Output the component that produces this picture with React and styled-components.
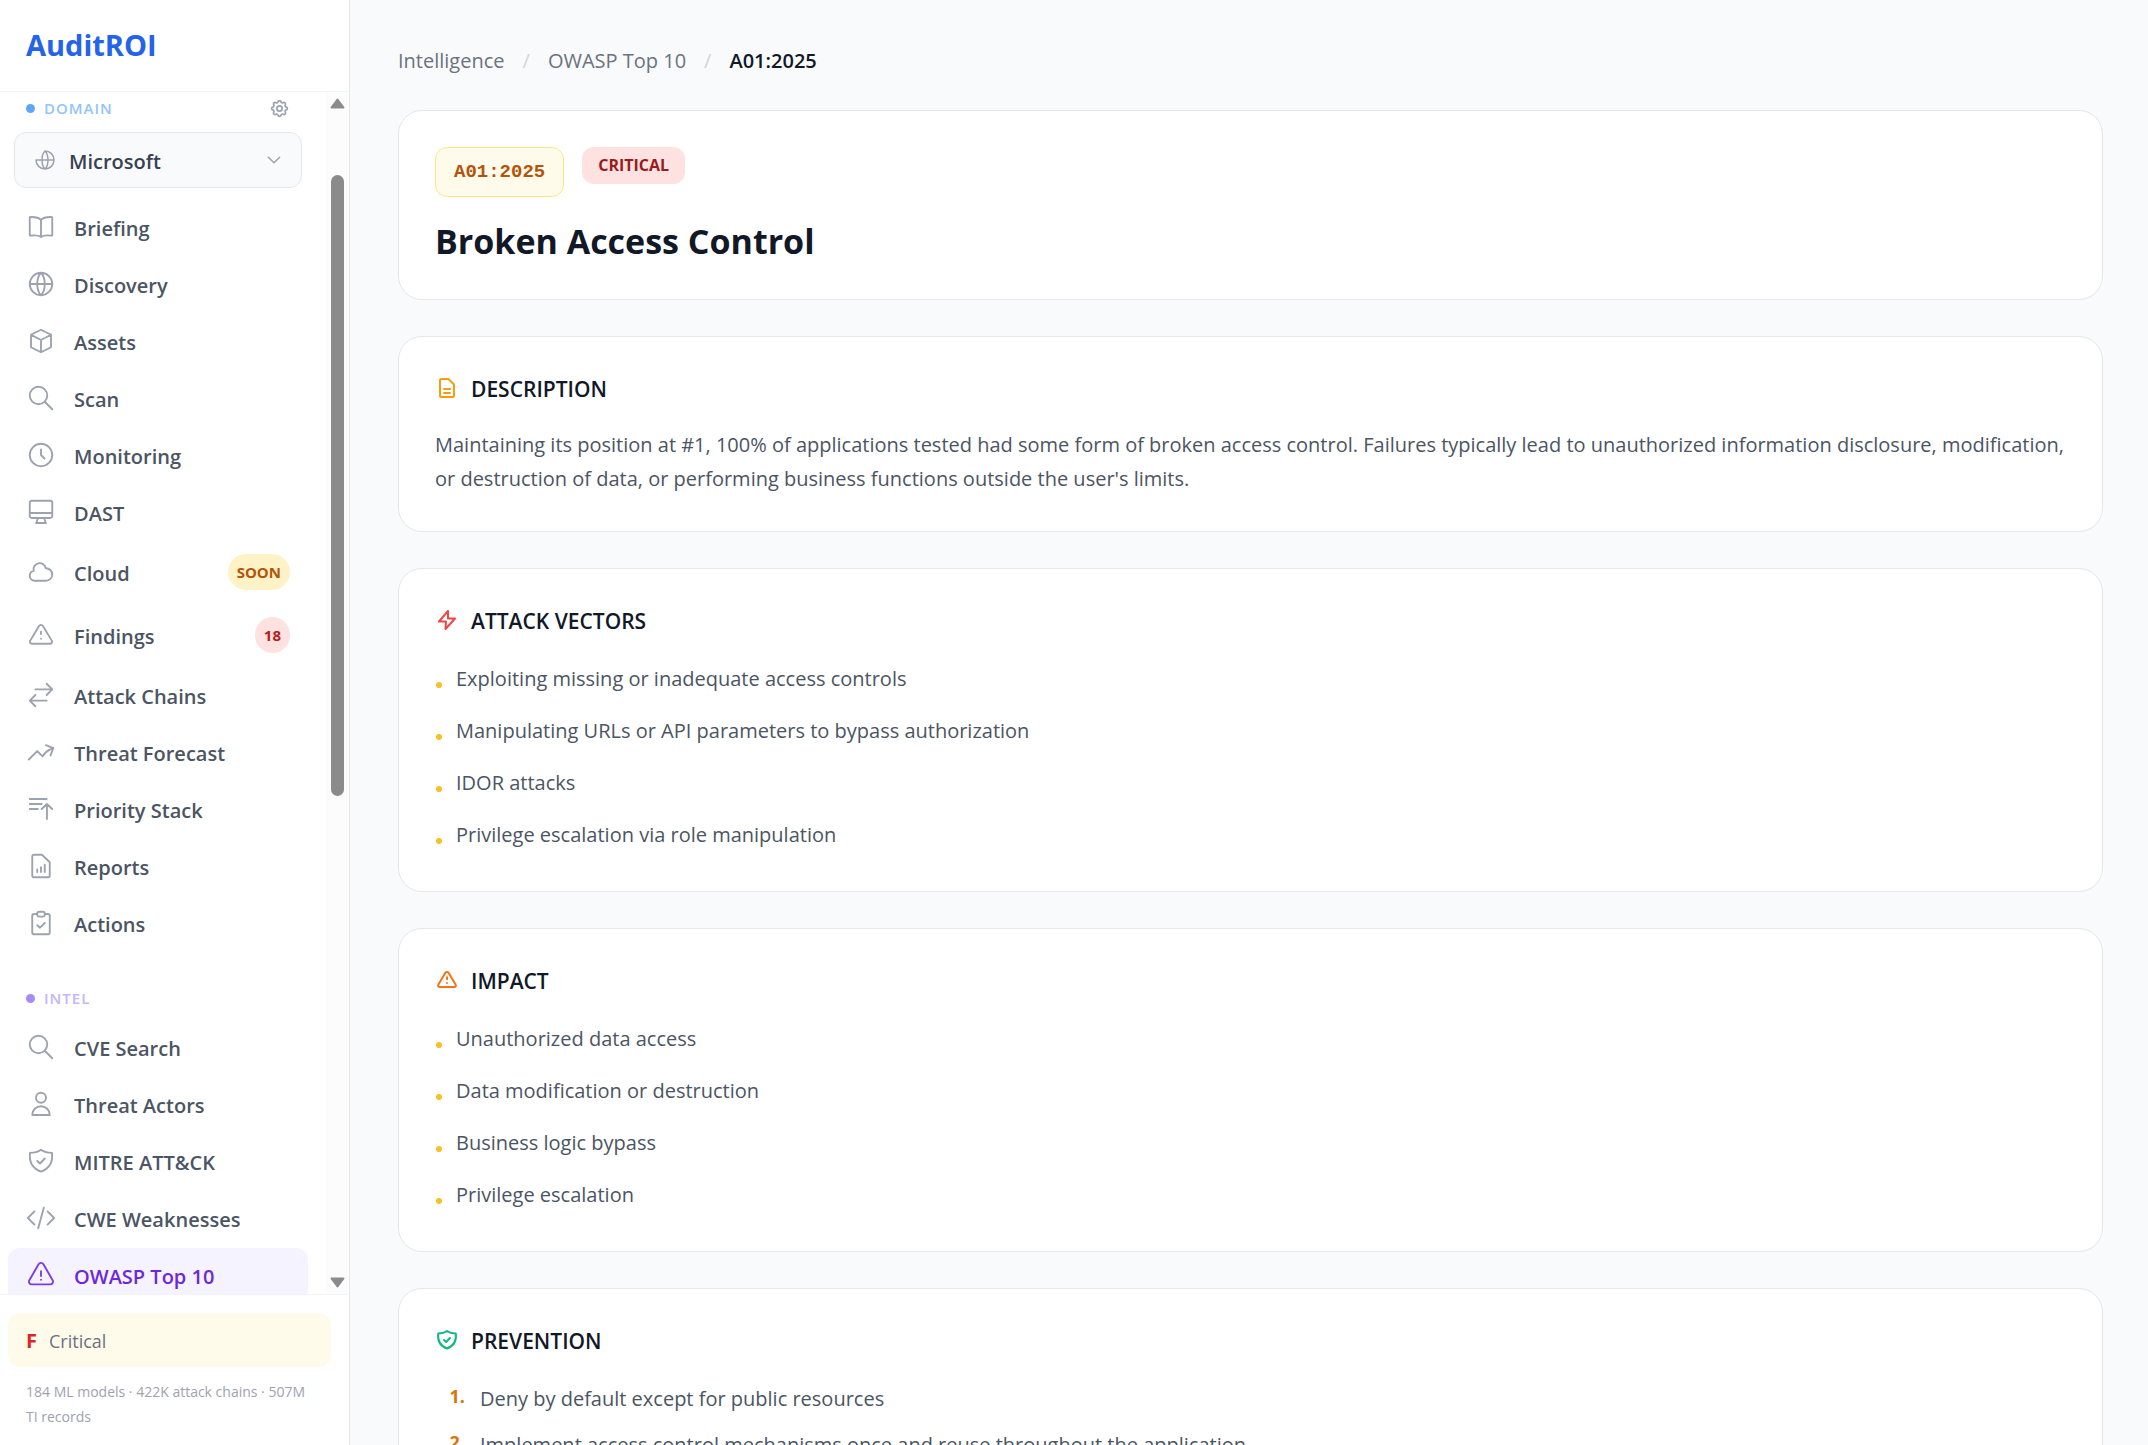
import React from 'react';
import styled, { createGlobalStyle } from 'styled-components';

const GlobalStyle = createGlobalStyle`
  * {
    box-sizing: border-box;
  }

  body {
    margin: 0;
    font-family: 'Open Sans', 'Noto Sans', sans-serif;
    font-size: 20px;
    line-height: 30px;
    color: #111827;
    background: #f9fafc;
  }

  h1, h2, p, ul, ol {
    margin: 0;
    padding: 0;
  }

  ul, ol {
    list-style: none;
  }

  a {
    color: inherit;
    text-decoration: none;
  }
`;

const Layout = styled.div`
  display: flex;
  height: 100vh;
  overflow: hidden;
`;

const Sidebar = styled.aside`
  display: flex;
  flex-direction: column;
  flex: 0 0 350px;
  background: #ffffff;
  border-right: 1px solid #e5e7eb;
`;

const SidebarHeader = styled.div`
  display: flex;
  align-items: center;
  height: 92px;
  padding: 0 26px 2px;
  border-bottom: 1px solid #f3f4f6;
`;

const Logo = styled.a`
  font-weight: 700;
  font-size: 29px;
  line-height: 36px;
  color: #2563eb;
`;

const SidebarBody = styled.div`
  display: flex;
  flex: 1;
  min-height: 0;
`;

const SidebarScroll = styled.div`
  flex: 1;
  padding: 4px 18px 0 8px;
  overflow: hidden;
`;

const Scrollbar = styled.div`
  display: flex;
  flex-direction: column;
  align-items: center;
  justify-content: space-between;
  width: 23px;
  padding: 6px 0;
  background: #fcfcfc;
`;

const ScrollTrack = styled.div`
  flex: 1;
  width: 13px;
  padding-top: 66px;
`;

const ScrollThumb = styled.div`
  height: 621px;
  border-radius: 7px;
  background: #8b8b8b;
`;

const SectionLabel = styled.div`
  display: flex;
  align-items: center;
  gap: 9px;
  height: 24px;
  padding: 0 18px;
  margin-top: ${({ $spaced }) => ($spaced ? '36px' : '0')};
  margin-bottom: ${({ $spaced }) => ($spaced ? '10px' : '12px')};
  font-weight: 600;
  font-size: 15px;
  letter-spacing: 1px;
  text-transform: uppercase;
  color: ${({ $color }) => $color};

  &::before {
    content: '';
    width: 9px;
    height: 9px;
    border-radius: 50%;
    background: ${({ $dot }) => $dot};
  }
`;

const SettingsButton = styled.button`
  display: flex;
  padding: 0;
  margin-left: auto;
  border: none;
  background: none;
  color: #9ca3af;
  cursor: pointer;
`;

const DomainPicker = styled.label`
  display: flex;
  align-items: center;
  gap: 12px;
  height: 56px;
  padding: 0 18px;
  margin: 0 6px 12px;
  border: 1px solid #e5e7eb;
  border-radius: 12px;
  background: #f9fafb;
  color: #9ca3af;
`;

const DomainSelect = styled.select`
  flex: 1;
  min-width: 0;
  padding: 3px 0 0;
  border: none;
  outline: none;
  appearance: none;
  background: none;
  font-family: inherit;
  font-weight: 600;
  font-size: 20px;
  line-height: 27px;
  color: #374151;
`;

const NavList = styled.ul`
  display: flex;
  flex-direction: column;
  gap: 3px;
`;

const NavLink = styled.a`
  display: flex;
  align-items: center;
  gap: 18px;
  padding: 12px 18px;
  border-radius: 12px;
  font-weight: 600;
  color: ${({ $active }) => ($active ? '#6d28d9' : '#4b5563')};
  background: ${({ $active }) => ($active ? '#f5f3ff' : 'transparent')};

  svg {
    color: ${({ $active }) => ($active ? '#7c3aed' : '#9ca3af')};
  }
`;

const NavLabel = styled.span`
  padding-top: 3px;
  line-height: 27px;
`;

const NavBadge = styled.span`
  padding: 0 9px;
  margin-left: auto;
  border-radius: 18px;
  font-weight: 700;
  font-size: 15px;
  line-height: 36px;
  color: ${({ $tone }) => ($tone === 'danger' ? '#b91c1c' : '#b45309')};
  background: ${({ $tone }) => ($tone === 'danger' ? '#fee2e2' : '#fef3c7')};
`;

const SidebarFooter = styled.div`
  padding: 18px 18px 16px 8px;
  border-top: 1px solid #f3f4f6;
`;

const GradeCard = styled.a`
  display: flex;
  align-items: center;
  gap: 12px;
  height: 54px;
  padding: 2px 18px 0;
  margin-bottom: 12px;
  border-radius: 12px;
  font-weight: 500;
  font-size: 18px;
  color: #6b7280;
  background: #fffbeb;

  strong {
    font-weight: 700;
    font-size: 20px;
    color: #dc2626;
  }
`;

const Footnote = styled.p`
  padding: 0 18px;
  font-size: 14px;
  line-height: 25px;
  color: #9ca3af;
`;

const Main = styled.main`
  flex: 1;
  min-width: 0;
  padding: 46px 45px 45px 48px;
  overflow: hidden;
`;

const Breadcrumb = styled.nav`
  display: flex;
  gap: 18px;
  margin-bottom: 34px;
  color: #6b7280;

  span {
    color: #d1d5db;
  }

  strong {
    font-weight: 600;
    color: #111827;
  }
`;

const Card = styled.section`
  padding: 36px;
  margin-bottom: 36px;
  border: 1px solid #e5e7eb;
  border-radius: 24px;
  background: #ffffff;
`;

const BadgeRow = styled.div`
  display: flex;
  align-items: flex-start;
  gap: 18px;
  margin-bottom: 22px;
`;

const CodeBadge = styled.span`
  padding: 0 18px;
  border: 1px solid #fde68a;
  border-radius: 12px;
  font-family: 'Liberation Mono', monospace;
  font-weight: 700;
  font-size: 19px;
  line-height: 48px;
  color: #b45309;
  background: #fffbeb;
`;

const SeverityBadge = styled.span`
  padding: 0 16px;
  border-radius: 12px;
  font-weight: 700;
  font-size: 16px;
  line-height: 37px;
  text-transform: uppercase;
  color: #991b1b;
  background: #fee2e2;
`;

const Title = styled.h1`
  font-weight: 700;
  font-size: 34px;
  line-height: 44px;
`;

const CardTitle = styled.h2`
  display: flex;
  align-items: center;
  gap: 12px;
  margin-bottom: 24px;
  font-weight: 600;
  font-size: 21px;
  line-height: 27px;
  text-transform: uppercase;

  svg {
    color: ${({ $iconColor }) => $iconColor};
  }

  span {
    padding-top: 3px;
  }
`;

const Paragraph = styled.p`
  padding-top: 1px;
  margin-bottom: -1px;
  line-height: 34px;
  color: #4b5563;
`;

const BulletList = styled.ul`
  display: flex;
  flex-direction: column;
  gap: 12px;
`;

const BulletItem = styled.li`
  display: flex;
  align-items: flex-start;
  gap: 14px;
  padding: 3px 0;
  line-height: 34px;
  color: #4b5563;

  &::before {
    content: '';
    width: 6px;
    height: 6px;
    margin: 20px 0 0 1px;
    border-radius: 50%;
    background: #fbbf24;
  }
`;

const StepList = styled.ol`
  display: flex;
  flex-direction: column;
  gap: 6px;
  counter-reset: step;
`;

const StepItem = styled.li`
  display: flex;
  align-items: flex-start;
  gap: 15px;
  padding: 3px 0;
  line-height: 34px;
  color: #4b5563;
  counter-increment: step;

  &::before {
    content: counter(step) '.';
    width: 30px;
    font-weight: 700;
    font-size: 18px;
    line-height: 28px;
    text-align: right;
    color: #d97706;
  }
`;

const StrokeIcon = styled.svg`
  flex: none;
  fill: none;
  stroke: currentColor;
  stroke-linecap: round;
  stroke-linejoin: round;
`;

const ICONS = {
  book: 'M12 6.25C10.4 4.5 7.4 3.9 3.5 4a.5.5 0 0 0-.5.5v13.9a.5.5 0 0 0 .6.5c3.6-.5 6.8-.1 8.4 1.1 1.6-1.2 4.8-1.6 8.400-1.1a.5.5 0 0 0 .6-.5V4.5a.5.5 0 0 0-.5-.5c-3.9-.1-6.9.5-8.5 2.250v13.750',
  globe: 'M21 12a9 9 0 1 1-18 0 9 9 0 0 1 18 0zM3 12h18M12 3c-2 2-3 5.200-3 9s1 7 3 9c2-2 3-5.200 3-9s-1-7-3-9z',
  globePartial: 'M12 3a9 9 0 1 1-9 9h18M12 3c-2 2-3 5.200-3 9s1 7 3 9c2-2 3-5.200 3-9s-1-7-3-9z',
  box: 'M12 3l8 4v10l-8 4-8-4V7zM4 7l8 4.200L20 7M12 11.200V21',
  search: 'M17 10a7 7 0 1 1-14 0 7 7 0 0 1 14 0zM15 15l6 6',
  clock: 'M21 12a9 9 0 1 1-18 0 9 9 0 0 1 18 0zM12 7.500V12l2.800 2.800',
  monitor: 'M4.500 3h15A1.500 1.500 0 0 1 21 4.500v10.800a1.500 1.500 0 0 1-1.500 1.500h-15A1.500 1.500 0 0 1 3 15.300V4.500A1.500 1.500 0 0 1 4.500 3zM3 12.750h18M9.400 17l-1.100 3.750M14.600 17l1.100 3.750M8 20.750h8',
  cloud: 'M3 15a4 4 0 004 4h9a5 5 0 10-.1-9.999 5.002 5.002 0 10-9.780 2.096A4.001 4.001 0 003 15z',
  warning: 'M12 9.250v2M12 15h.01M10.400 4.800a1.850 1.850 0 0 1 3.200 0l7.100 11.900a1.500 1.500 0 0 1-1.300 2.300H4.600a1.500 1.500 0 0 1-1.300-2.300z',
  swap: 'M7.500 21 3 16.500m0 0L7.500 12M3 16.500h13.500m0-13.500L21 7.500m0 0L16.500 12M21 7.500H7.500',
  trend: 'M2.250 18 9 11.250l4.306 4.306a11.950 11.950 0 0 1 5.814-5.518l2.740-1.220m0 0-5.940-2.281m5.940 2.280-2.280 5.941',
  stack: 'M3 4h13.500M3 8h9.500M3 12h6.500M12.500 12l4.250-4L21 12M16.750 8v12',
  report: 'M6.500 3h6.300L19 9v10.500a1.500 1.500 0 0 1-1.500 1.500h-11A1.500 1.500 0 0 1 5 19.500v-15A1.500 1.500 0 0 1 6.500 3zM9 14.750v2M12 13v3.750M15 11v5.750',
  clipboard: 'M9 4.750H6.500A1.500 1.500 0 0 0 5 6.250V19.500A1.500 1.500 0 0 0 6.500 21h11a1.500 1.500 0 0 0 1.500-1.500V6.250a1.500 1.500 0 0 0-1.500-1.500H15M10.500 3h3a1.500 1.500 0 0 1 1.500 1.500v.9a1.500 1.500 0 0 1-1.500 1.500h-3A1.500 1.500 0 0 1 9 5.400v-.9A1.500 1.500 0 0 1 10.500 3zM9 13.750l2.200 2L15 12',
  person: 'M16 7a4 4 0 1 1-8 0 4 4 0 0 1 8 0zM5 20.750a7 7 0 0 1 14 0z',
  shield: 'M12 3C9.500 4.800 6.800 5.500 3.200 5.500 2.400 12.800 5 18 12 20.500c7-2.500 9.600-7.700 8.800-15C17.200 5.500 14.500 4.800 12 3zM9 12l2.200 2L15 10',
  code: 'M17.250 6.750 22.500 12l-5.250 5.250m-10.500 0L1.500 12l5.250-5.250m7.500-3-4.500 16.500',
  triangle: 'M12 9v3.750m-9.303 3.376c-.866 1.500.217 3.374 1.948 3.374h14.710c1.730 0 2.813-1.874 1.948-3.374L13.949 3.378c-.866-1.500-3.032-1.500-3.898 0L2.697 16.126ZM12 15.750h.007v.008H12v-.008Z',
  chevron: 'M19.500 8.250l-7.500 7.500-7.500-7.500',
  gear: 'M10.325 4.317c.426-1.756 2.924-1.756 3.350 0a1.724 1.724 0 002.573 1.066c1.543-.94 3.310.826 2.370 2.370a1.724 1.724 0 001.065 2.572c1.756.426 1.756 2.924 0 3.350a1.724 1.724 0 00-1.066 2.573c.94 1.543-.826 3.310-2.370 2.370a1.724 1.724 0 00-2.572 1.065c-.426 1.756-2.924 1.756-3.350 0a1.724 1.724 0 00-2.573-1.066c-1.543.94-3.310-.826-2.370-2.370a1.724 1.724 0 00-1.065-2.572c-1.756-.426-1.756-2.924 0-3.350a1.724 1.724 0 001.066-2.573c-.94-1.543.826-3.310 2.370-2.370.996.608 2.296.07 2.572-1.065zM15 12a3 3 0 11-6 0 3 3 0 016 0z',
  document: 'M6.500 3h7L19 8.500v11a1.500 1.500 0 0 1-1.500 1.500h-11A1.500 1.500 0 0 1 5 19.500v-15A1.500 1.500 0 0 1 6.500 3zM9 13h6M9 17h6',
  bolt: 'M13 3 4 13.500h7L10.500 21 20 10.500h-7z',
};

function Icon({ name, size = 30, weight = 1.5 }) {
  return (
    <StrokeIcon viewBox="0 0 24 24" width={size} height={size} strokeWidth={weight} aria-hidden="true">
      <path d={ICONS[name]} />
    </StrokeIcon>
  );
}

const domainLinks = [
  { icon: 'book', label: 'Briefing' },
  { icon: 'globe', label: 'Discovery' },
  { icon: 'box', label: 'Assets' },
  { icon: 'search', label: 'Scan' },
  { icon: 'clock', label: 'Monitoring' },
  { icon: 'monitor', label: 'DAST' },
  { icon: 'cloud', label: 'Cloud', badge: 'SOON' },
  { icon: 'warning', label: 'Findings', badge: '18', tone: 'danger' },
  { icon: 'swap', label: 'Attack Chains' },
  { icon: 'trend', label: 'Threat Forecast' },
  { icon: 'stack', label: 'Priority Stack' },
  { icon: 'report', label: 'Reports' },
  { icon: 'clipboard', label: 'Actions' },
];

const intelLinks = [
  { icon: 'search', label: 'CVE Search' },
  { icon: 'person', label: 'Threat Actors' },
  { icon: 'shield', label: 'MITRE ATT&CK' },
  { icon: 'code', label: 'CWE Weaknesses' },
  { icon: 'triangle', label: 'OWASP Top 10', active: true },
];

const attackVectors = [
  'Exploiting missing or inadequate access controls',
  'Manipulating URLs or API parameters to bypass authorization',
  'IDOR attacks',
  'Privilege escalation via role manipulation',
];

const impacts = [
  'Unauthorized data access',
  'Data modification or destruction',
  'Business logic bypass',
  'Privilege escalation',
];

const preventions = [
  'Deny by default except for public resources',
  'Implement access control mechanisms once and reuse throughout the application',
];

function Nav({ links }) {
  return (
    <NavList>
      {links.map(({ icon, label, badge, tone, active }) => (
        <li key={label}>
          <NavLink href="#" $active={active}>
            <Icon name={icon} />
            <NavLabel>{label}</NavLabel>
            {badge && <NavBadge $tone={tone}>{badge}</NavBadge>}
          </NavLink>
        </li>
      ))}
    </NavList>
  );
}

function DetailCard({ title, icon, iconColor, children }) {
  return (
    <Card>
      <CardTitle $iconColor={iconColor}>
        <Icon name={icon} size={24} weight={2} />
        <span>{title}</span>
      </CardTitle>
      {children}
    </Card>
  );
}

export default function App() {
  return (
    <React.Fragment>
      <GlobalStyle />
      <Layout>
        <Sidebar>
          <SidebarHeader>
            <Logo href="#">AuditROI</Logo>
          </SidebarHeader>
          <SidebarBody>
            <SidebarScroll>
              <SectionLabel $color="#93c5fd" $dot="#60a5fa">
                Domain
                <SettingsButton type="button" aria-label="Domain settings">
                  <Icon name="gear" size={21} weight={2} />
                </SettingsButton>
              </SectionLabel>
              <DomainPicker>
                <Icon name="globePartial" size={24} />
                <DomainSelect aria-label="Domain" defaultValue="Microsoft">
                  <option>Microsoft</option>
                </DomainSelect>
                <Icon name="chevron" size={18} weight={2} />
              </DomainPicker>
              <Nav links={domainLinks} />
              <SectionLabel $spaced $color="#c4b5fd" $dot="#a78bfa">Intel</SectionLabel>
              <Nav links={intelLinks} />
            </SidebarScroll>
            <Scrollbar aria-hidden="true">
              <svg width="15" height="11" viewBox="0 0 15 11">
                <path d="M7.500 1.500 13.500 9.500h-12z" fill="#8b8b8b" stroke="#8b8b8b" strokeWidth="2" strokeLinejoin="round" />
              </svg>
              <ScrollTrack>
                <ScrollThumb />
              </ScrollTrack>
              <svg width="15" height="11" viewBox="0 0 15 11">
                <path d="M7.500 9.500 1.500 1.500h12z" fill="#8b8b8b" stroke="#8b8b8b" strokeWidth="2" strokeLinejoin="round" />
              </svg>
            </Scrollbar>
          </SidebarBody>
          <SidebarFooter>
            <GradeCard href="#"><strong>F</strong>Critical</GradeCard>
            <Footnote>184 ML models · 422K attack chains · 507M TI records</Footnote>
          </SidebarFooter>
        </Sidebar>
        <Main>
          <Breadcrumb aria-label="Breadcrumb">
            <a href="#">Intelligence</a>
            <span>/</span>
            <a href="#">OWASP Top 10</a>
            <span>/</span>
            <strong>A01:2025</strong>
          </Breadcrumb>
          <Card>
            <BadgeRow>
              <CodeBadge>A01:2025</CodeBadge>
              <SeverityBadge>Critical</SeverityBadge>
            </BadgeRow>
            <Title>Broken Access Control</Title>
          </Card>
          <DetailCard title="Description" icon="document" iconColor="#f59e0b">
            <Paragraph>
              Maintaining its position at #1, 100% of applications tested had some form of broken access control. Failures typically lead to unauthorized information disclosure, modification, or destruction of data, or performing business functions outside the user's limits.
            </Paragraph>
          </DetailCard>
          <DetailCard title="Attack Vectors" icon="bolt" iconColor="#ef4444">
            <BulletList>
              {attackVectors.map(item => <BulletItem key={item}>{item}</BulletItem>)}
            </BulletList>
          </DetailCard>
          <DetailCard title="Impact" icon="warning" iconColor="#f97316">
            <BulletList>
              {impacts.map(item => <BulletItem key={item}>{item}</BulletItem>)}
            </BulletList>
          </DetailCard>
          <DetailCard title="Prevention" icon="shield" iconColor="#10b981">
            <StepList>
              {preventions.map(item => <StepItem key={item}>{item}</StepItem>)}
            </StepList>
          </DetailCard>
        </Main>
      </Layout>
    </React.Fragment>
  );
}
